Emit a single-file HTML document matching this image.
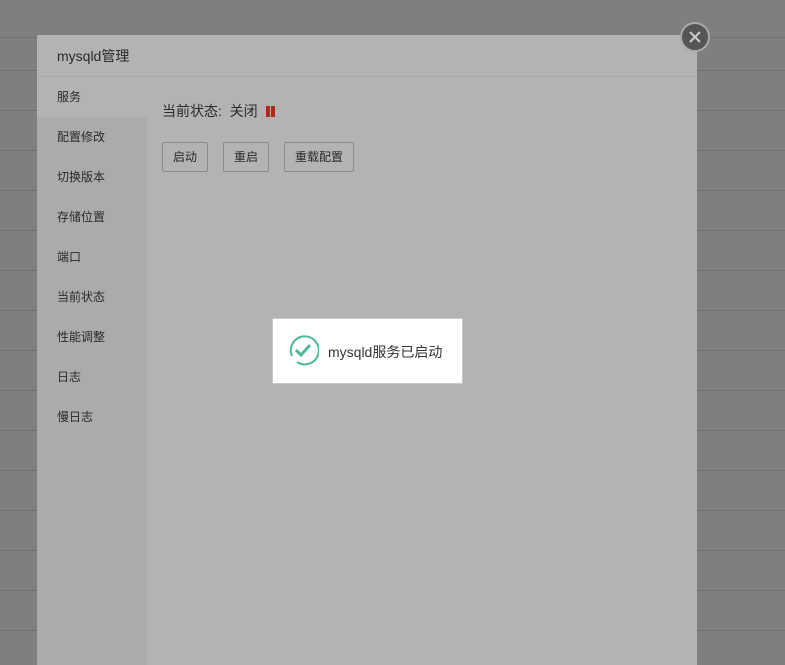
<!DOCTYPE html>
<html><head><meta charset="utf-8"><style>
*{margin:0;padding:0;box-sizing:border-box}
html,body{width:785px;height:665px;overflow:hidden}
body{background:#7f7f7f;position:relative;font-family:"Liberation Sans","Noto Sans CJK SC",sans-serif;color:#333}
.ln{position:absolute;left:0;width:785px;height:1px;background:#707070}
.modal{position:absolute;left:37px;top:35px;width:660px;height:630px;background:#b3b3b3;overflow:hidden}
.hd{height:42px;border-bottom:1px solid #a9a9a9;font-size:14px;line-height:42px;padding-left:20px;color:#2a2a2a}
.side{position:absolute;left:0;top:42px;width:110px;height:588px;background:#ababab}
.side div{height:40px;line-height:40px;padding-left:20px;font-size:12px;color:#2a2a2a}
.side div.a{background:#b3b3b3}
.st{position:absolute;left:125px;top:66px;font-size:14px;color:#2a2a2a}
.bar{display:inline-block;width:4px;height:11px;background:#b3261e;margin-left:1px;vertical-align:-1px}
.btn{position:absolute;top:107px;height:30px;border:1px solid #8c8c8c;border-radius:2px;font-size:12px;line-height:28px;text-align:center;color:#2a2a2a}
.toast{position:absolute;left:272px;top:318px;width:191px;height:66px;background:#fff;border:1px solid #c8c8c8}
.toast span{position:absolute;left:55px;top:23px;font-size:14px;color:#333}
.close{position:absolute;left:680px;top:22px;width:30px;height:30px;border-radius:50%;background:#555;border:2px solid #a9a9a9}
</style></head><body>
<div class="ln" style="top:37px"></div><div class="ln" style="top:70px"></div>
<div class="ln" style="top:110px"></div><div class="ln" style="top:150px"></div><div class="ln" style="top:190px"></div><div class="ln" style="top:230px"></div><div class="ln" style="top:270px"></div><div class="ln" style="top:310px"></div><div class="ln" style="top:350px"></div><div class="ln" style="top:390px"></div><div class="ln" style="top:430px"></div><div class="ln" style="top:470px"></div><div class="ln" style="top:510px"></div><div class="ln" style="top:550px"></div><div class="ln" style="top:590px"></div><div class="ln" style="top:630px"></div>
<div class="modal">
<div class="hd">mysqld管理</div>
<div class="side"><div class="a">服务</div><div>配置修改</div><div>切换版本</div><div>存储位置</div><div>端口</div><div>当前状态</div><div>性能调整</div><div>日志</div><div>慢日志</div></div>
<div class="st">当前状态:&nbsp; 关闭 &nbsp;<span class="bar"></span><span class="bar"></span></div>
<div class="btn" style="left:125px;width:46px">启动</div>
<div class="btn" style="left:186px;width:46px">重启</div>
<div class="btn" style="left:247px;width:70px">重载配置</div>
</div>
<div class="toast"><svg style="position:absolute;left:14px;top:15px" width="32" height="32" viewBox="0 0 32 32"><path d="M5 22A14 14 0 1 1 10 28" fill="none" stroke="#4fb89a" stroke-width="2"/><path d="M9 16l5 5 9-10" fill="none" stroke="#4fb89a" stroke-width="3"/></svg><span>mysqld服务已启动</span></div>
<div class="close"><svg width="26" height="26" viewBox="0 0 26 26"><path d="M8 8l10 10M18 8L8 18" stroke="#ccc" stroke-width="2"/></svg></div>
</body></html>
